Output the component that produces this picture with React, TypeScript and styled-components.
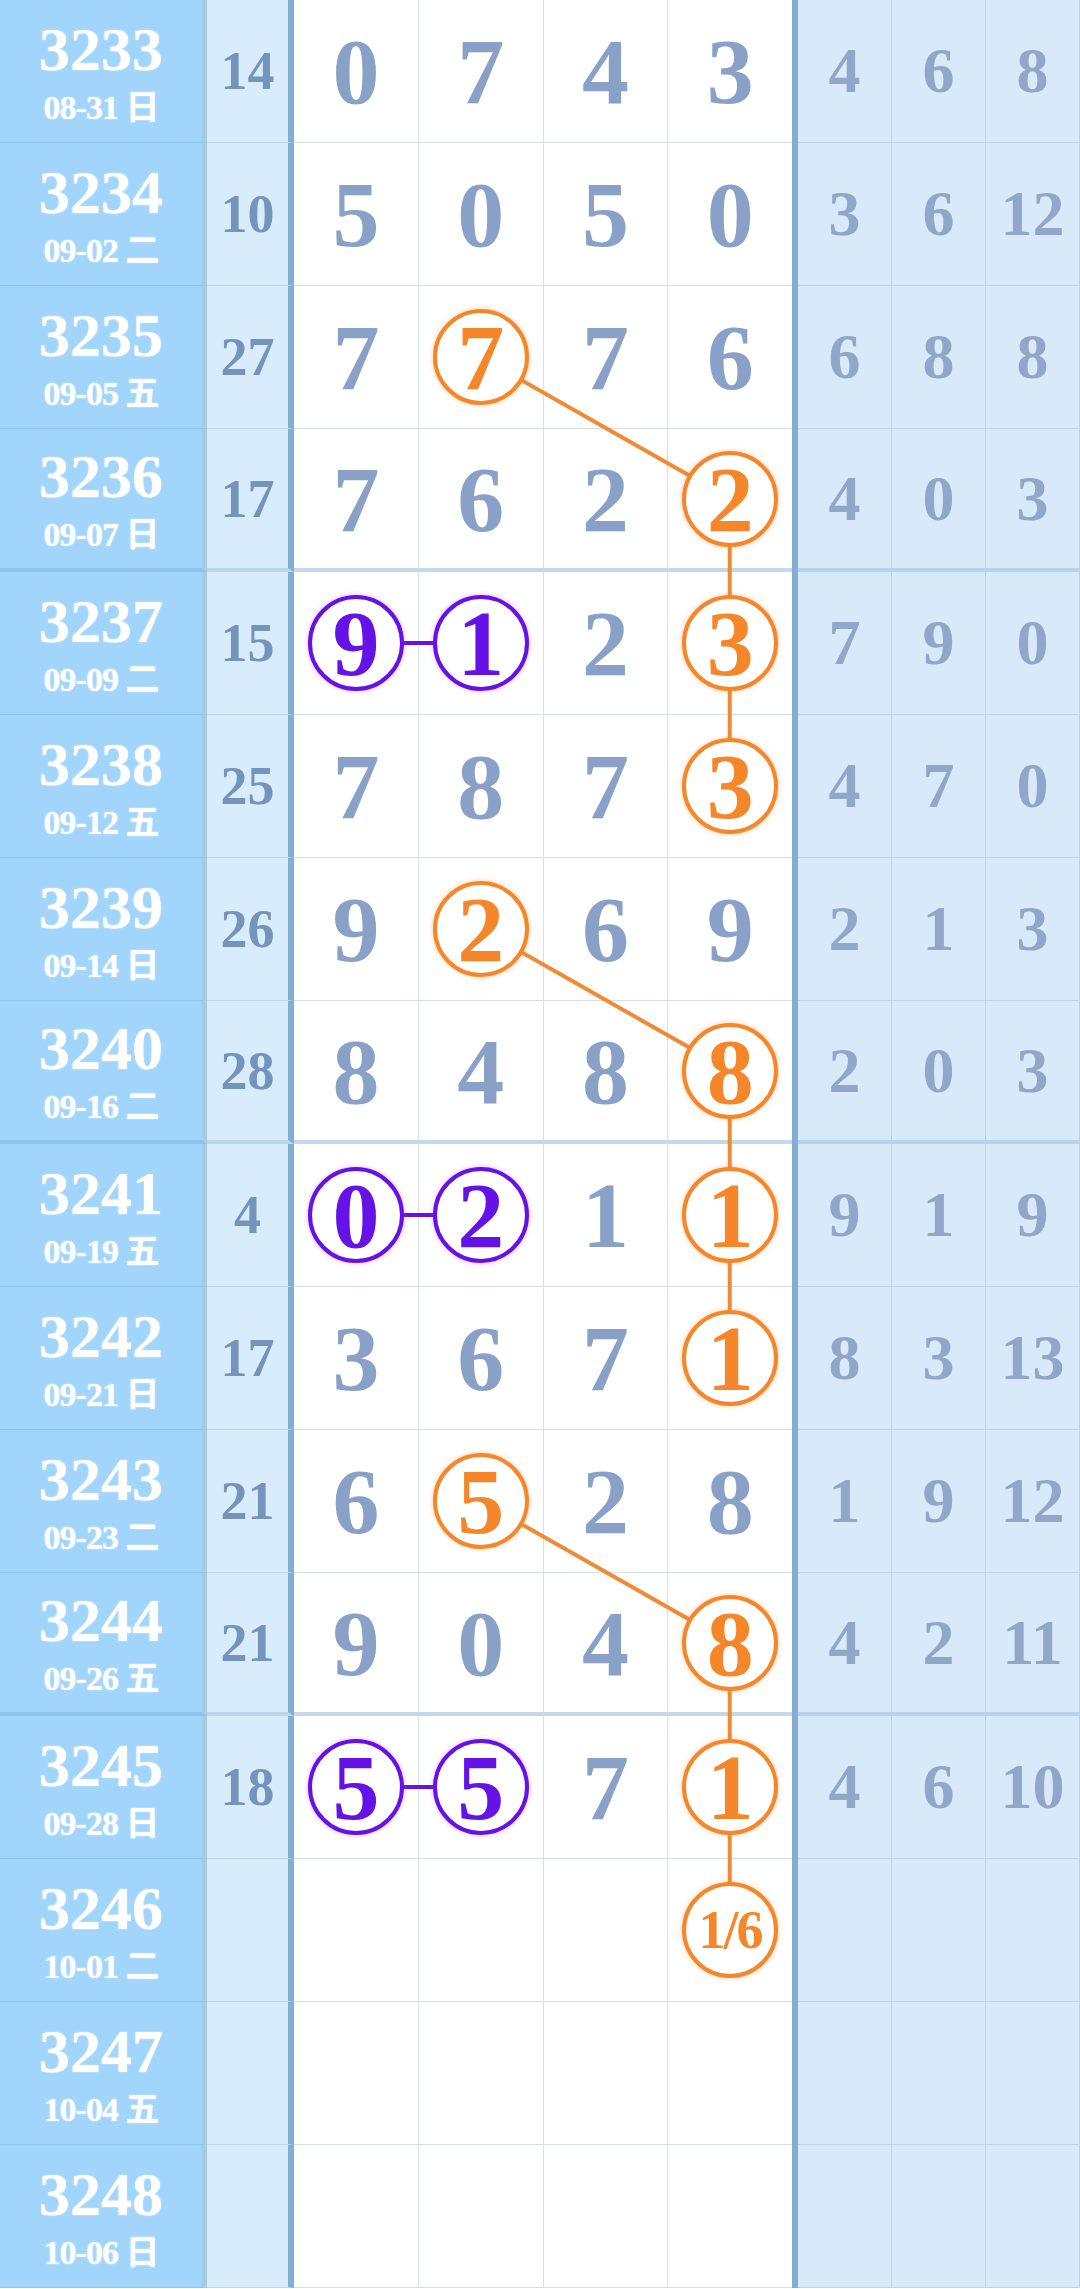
import React from 'react'
import styled, { createGlobalStyle } from 'styled-components'

const ROW_H = 143
const ISSUE_W = 207
const SUM_W = 87
const BOARD_LEFT = ISSUE_W + SUM_W
const DIGIT_W = 124.5

type Tone = 'o' | 'p' | null

interface Draw {
  issue: string
  date: string
  sum?: number
  digits: string[]
  marks: Tone[]
  tail: number[]
}

const draws: Draw[] = [
  { issue: '3233', date: '08-31 日', sum: 14, digits: ['0', '7', '4', '3'], marks: [null, null, null, null], tail: [4, 6, 8] },
  { issue: '3234', date: '09-02 二', sum: 10, digits: ['5', '0', '5', '0'], marks: [null, null, null, null], tail: [3, 6, 12] },
  { issue: '3235', date: '09-05 五', sum: 27, digits: ['7', '7', '7', '6'], marks: [null, 'o', null, null], tail: [6, 8, 8] },
  { issue: '3236', date: '09-07 日', sum: 17, digits: ['7', '6', '2', '2'], marks: [null, null, null, 'o'], tail: [4, 0, 3] },
  { issue: '3237', date: '09-09 二', sum: 15, digits: ['9', '1', '2', '3'], marks: ['p', 'p', null, 'o'], tail: [7, 9, 0] },
  { issue: '3238', date: '09-12 五', sum: 25, digits: ['7', '8', '7', '3'], marks: [null, null, null, 'o'], tail: [4, 7, 0] },
  { issue: '3239', date: '09-14 日', sum: 26, digits: ['9', '2', '6', '9'], marks: [null, 'o', null, null], tail: [2, 1, 3] },
  { issue: '3240', date: '09-16 二', sum: 28, digits: ['8', '4', '8', '8'], marks: [null, null, null, 'o'], tail: [2, 0, 3] },
  { issue: '3241', date: '09-19 五', sum: 4, digits: ['0', '2', '1', '1'], marks: ['p', 'p', null, 'o'], tail: [9, 1, 9] },
  { issue: '3242', date: '09-21 日', sum: 17, digits: ['3', '6', '7', '1'], marks: [null, null, null, 'o'], tail: [8, 3, 13] },
  { issue: '3243', date: '09-23 二', sum: 21, digits: ['6', '5', '2', '8'], marks: [null, 'o', null, null], tail: [1, 9, 12] },
  { issue: '3244', date: '09-26 五', sum: 21, digits: ['9', '0', '4', '8'], marks: [null, null, null, 'o'], tail: [4, 2, 11] },
  { issue: '3245', date: '09-28 日', sum: 18, digits: ['5', '5', '7', '1'], marks: ['p', 'p', null, 'o'], tail: [4, 6, 10] },
  { issue: '3246', date: '10-01 二', digits: ['', '', '', '1/6'], marks: [null, null, null, 'o'], tail: [] },
  { issue: '3247', date: '10-04 五', digits: ['', '', '', ''], marks: [null, null, null, null], tail: [] },
  { issue: '3248', date: '10-06 日', digits: ['', '', '', ''], marks: [null, null, null, null], tail: [] },
]

// orange chains: [row, col]
const chains: [number, number][][] = [
  [[2, 1], [3, 3], [4, 3], [5, 3]],
  [[6, 1], [7, 3], [8, 3], [9, 3]],
  [[10, 1], [11, 3], [12, 3], [13, 3]],
]
const pairs = [4, 8, 12]

const isGroupEnd = (i: number) => i === 3 || i === 7 || i === 11
const lineW = (i: number) => (isGroupEnd(i) ? 4 : 1)
const cx = (col: number) => BOARD_LEFT + DIGIT_W * col + DIGIT_W / 2
const cy = (row: number) => ROW_H * row + (ROW_H - lineW(row)) / 2

const GlobalStyle = createGlobalStyle`
  html, body {
    margin: 0;
    padding: 0;
    background: #ffffff;
  }
  body {
    font-family: "Liberation Serif", "Noto Sans CJK SC", serif;
    font-weight: bold;
  }
`

const Table = styled.div`
  position: relative;
  width: 1080px;
`

const Row = styled.div`
  display: flex;
  height: ${ROW_H}px;
`

const IssueCell = styled.div<{ $group: boolean }>`
  box-sizing: border-box;
  width: ${ISSUE_W}px;
  background: #a2d5fb;
  border-right: 5px solid #a5cbe8;
  border-bottom: ${(p) => (p.$group ? '4px solid #8fc3ec' : '1px solid #8ec4ee')};
  display: flex;
  flex-direction: column;
  align-items: center;
  justify-content: center;
  gap: 11px;
  color: #ffffff;
  text-shadow: 0 0 2px rgba(255, 255, 255, 0.6);
`

const IssueNo = styled.div`
  font-size: 62px;
  line-height: 62px;
`

const IssueDate = styled.div`
  font-size: 34px;
  line-height: 34px;
  white-space: nowrap;
  letter-spacing: -1px;
`

const SumCell = styled.div<{ $group: boolean }>`
  box-sizing: border-box;
  width: ${SUM_W}px;
  background: #d9ecfb;
  border-right: 6px solid #84aed1;
  border-bottom: ${(p) => (p.$group ? '4px solid #bcd5ea' : '1px solid #bfd5e7')};
  display: flex;
  align-items: center;
  justify-content: center;
  font-size: 54px;
  line-height: 1;
  color: #7494bb;
`

const Board = styled.div`
  box-sizing: border-box;
  width: ${DIGIT_W * 4 + 6}px;
  display: flex;
  border-right: 6px solid #84aed1;
`

const DigitCell = styled.div<{ $group: boolean }>`
  box-sizing: border-box;
  flex: 1;
  background: #ffffff;
  border-right: 1px solid #d5e0e7;
  border-bottom: ${(p) => (p.$group ? '4px solid #c3d9eb' : '1px solid #d3dfe5')};
  display: flex;
  align-items: center;
  justify-content: center;
  font-size: 94px;
  line-height: 1;
  color: #89a1c7;

  &:last-child {
    border-right: none;
  }
`

const Ball = styled.span<{ $tone: 'o' | 'p'; $small?: boolean }>`
  position: relative;
  z-index: 2;
  box-sizing: border-box;
  width: 96px;
  height: 96px;
  border-radius: 50%;
  background: #ffffff;
  border: 4px solid ${(p) => (p.$tone === 'o' ? '#f5862a' : '#6512e6')};
  color: ${(p) => (p.$tone === 'o' ? '#f5862a' : '#6512e6')};
  box-shadow: 0 0 5px ${(p) => (p.$tone === 'o' ? 'rgba(245, 134, 42, 0.45)' : 'rgba(190, 60, 230, 0.4)')};
  display: flex;
  align-items: center;
  justify-content: center;
  font-size: ${(p) => (p.$small ? '54px' : '94px')};
  line-height: 1;
  letter-spacing: ${(p) => (p.$small ? '-2px' : '0')};
`

const Tail = styled.div`
  flex: 1;
  display: flex;
`

const TailCell = styled.div<{ $group: boolean }>`
  box-sizing: border-box;
  flex: 1;
  background: #d8eafa;
  border-right: 1px solid #bcd1ec;
  border-bottom: ${(p) => (p.$group ? '4px solid #bad1ea' : '1px solid #bdd2ea')};
  display: flex;
  align-items: center;
  justify-content: center;
  font-size: 64px;
  line-height: 1;
  color: #91a6c8;
`

const Overlay = styled.svg`
  position: absolute;
  top: 0;
  left: 0;
  z-index: 1;
  pointer-events: none;
`

export default function App() {
  return (
    <>
      <GlobalStyle />
      <Table>
        {draws.map((d, i) => {
          const g = isGroupEnd(i)
          return (
            <Row key={d.issue}>
              <IssueCell $group={g}>
                <IssueNo>{d.issue}</IssueNo>
                <IssueDate>{d.date}</IssueDate>
              </IssueCell>
              <SumCell $group={g}>{d.sum ?? ''}</SumCell>
              <Board>
                {d.digits.map((v, k) => {
                  const tone = d.marks[k]
                  return (
                    <DigitCell key={k} $group={g}>
                      {tone ? (
                        <Ball $tone={tone} $small={v.length > 1}>
                          {v}
                        </Ball>
                      ) : (
                        v
                      )}
                    </DigitCell>
                  )
                })}
              </Board>
              <Tail>
                {[0, 1, 2].map((k) => (
                  <TailCell key={k} $group={g}>
                    {d.tail[k] ?? ''}
                  </TailCell>
                ))}
              </Tail>
            </Row>
          )
        })}
        <Overlay width={1080} height={ROW_H * draws.length}>
          {chains.map((c, n) => (
            <polyline
              key={n}
              points={c.map(([r, k]) => `${cx(k)},${cy(r)}`).join(' ')}
              fill="none"
              stroke="#f08a34"
              strokeWidth={4}
            />
          ))}
          {pairs.map((r) => (
            <line key={r} x1={cx(0)} y1={cy(r)} x2={cx(1)} y2={cy(r)} stroke="#6512e6" strokeWidth={4} />
          ))}
        </Overlay>
      </Table>
    </>
  )
}
